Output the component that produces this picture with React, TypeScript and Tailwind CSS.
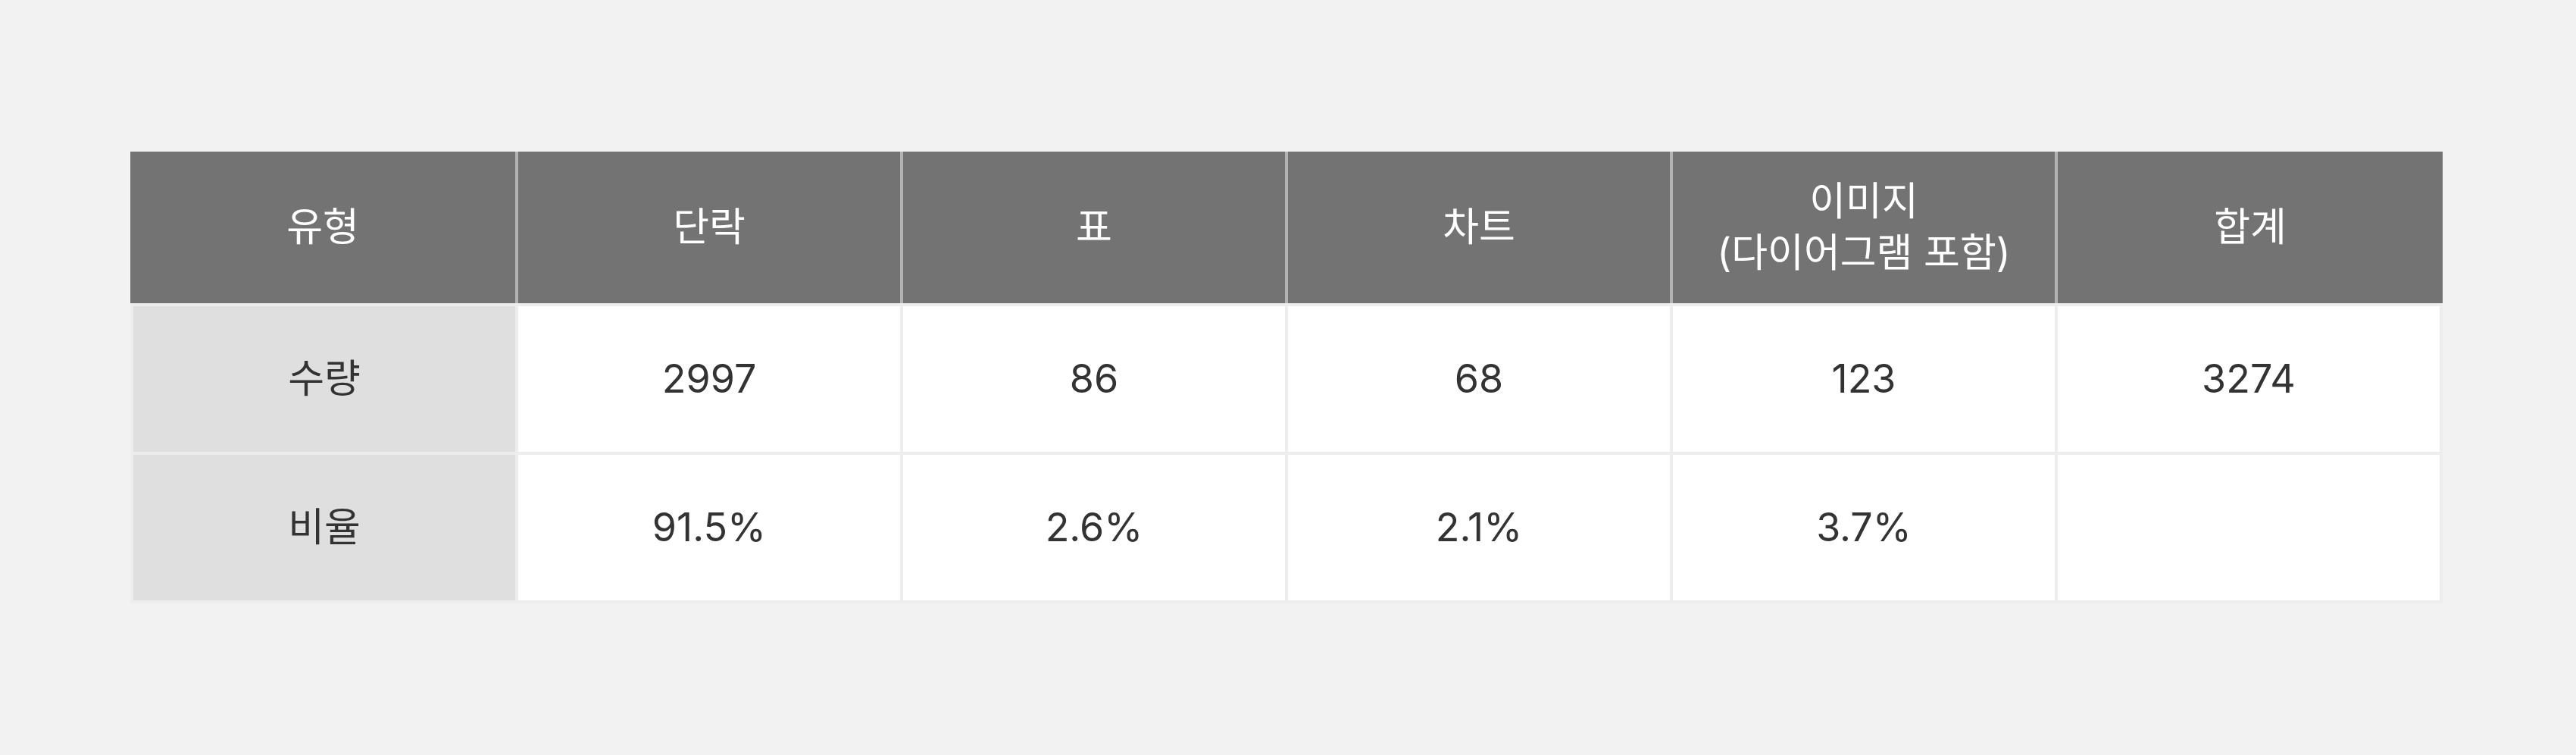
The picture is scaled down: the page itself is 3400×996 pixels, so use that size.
import React from "react";

const headers: React.ReactNode[] = [
  "유형",
  "단락",
  "표",
  "차트",
  <>
    이미지
    <br />
    (다이어그램 포함)
  </>,
  "합계",
];

const rows: string[][] = [
  ["수량", "2997", "86", "68", "123", "3274"],
  ["비율", "91.5%", "2.6%", "2.1%", "3.7%", ""],
];

export default function App() {
  return (
    <div
      className="min-h-screen w-full bg-[#f2f2f2] flex items-center justify-center"
      style={{ fontFamily: 'Inter, "Noto Sans CJK KR", sans-serif' }}
    >
      <div className="w-[3052px] bg-[#ededed] -translate-x-[2px]">
        <div className="flex h-[200px] bg-[#737373]">
          {headers.map((h, i) => (
            <div
              key={i}
              className={
                i === 0
                  ? "w-[508px] flex items-center justify-center text-center text-white text-[52px] leading-[1.3]"
                  : i === 5
                  ? "w-[512px] border-l-4 border-[#b3b3b3] flex items-center justify-center text-center text-white text-[52px] leading-[1.3]"
                  : "w-[508px] border-l-4 border-[#b3b3b3] flex items-center justify-center text-center text-white text-[52px] leading-[1.3]"
              }
            >
              <span>{h}</span>
            </div>
          ))}
        </div>
        <div className="grid grid-cols-6 gap-1 p-1">
          {rows.map((r, ri) =>
            r.map((c, ci) => (
              <div
                key={`${ri}-${ci}`}
                className={
                  ci === 0
                    ? "h-[192px] bg-[#dfdfdf] flex items-center justify-center text-[52px] text-[#333333]"
                    : "h-[192px] bg-white flex items-center justify-center text-[52px] text-[#333333]"
                }
              >
                {c}
              </div>
            ))
          )}
        </div>
      </div>
    </div>
  );
}
